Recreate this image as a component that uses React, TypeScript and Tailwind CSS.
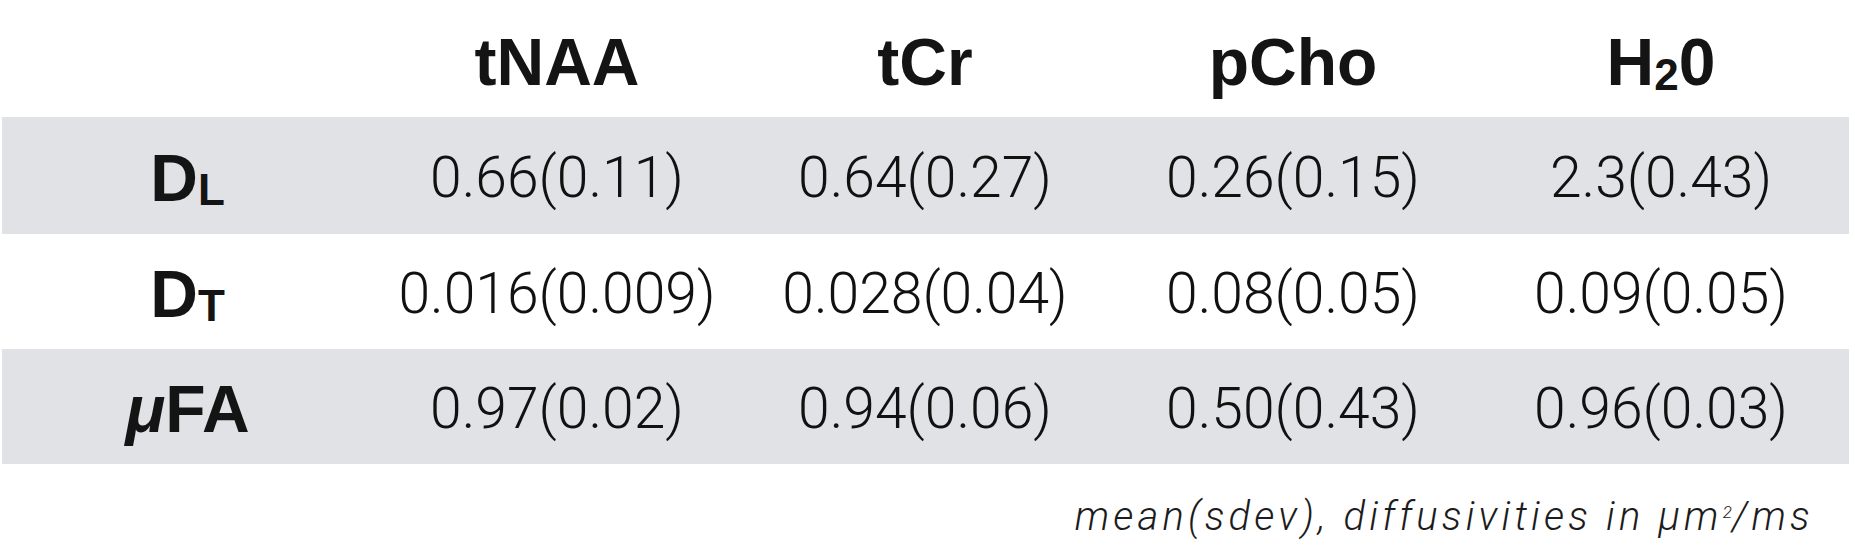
import React from "react"

const cols = ["tNAA", "tCr", "pCho"]

const rows: { label: React.ReactNode; values: string[]; shaded: boolean; height: string }[] = [
    {
        label: (
            <>
                D<span className="relative top-[4px] text-[44px]">L</span>
            </>
        ),
        values: ["0.66(0.11)", "0.64(0.27)", "0.26(0.15)", "2.3(0.43)"],
        shaded: true,
        height: "h-[117px]",
    },
    {
        label: (
            <>
                D<span className="relative top-[4px] text-[44px]">T</span>
            </>
        ),
        values: ["0.016(0.009)", "0.028(0.04)", "0.08(0.05)", "0.09(0.05)"],
        shaded: false,
        height: "h-[115px]",
    },
    {
        label: (
            <>
                <i>μ</i>FA
            </>
        ),
        values: ["0.97(0.02)", "0.94(0.06)", "0.50(0.43)", "0.96(0.03)"],
        shaded: true,
        height: "h-[115px]",
    },
]

const gridCols = "grid grid-cols-[371px_368px_368px_368px_368px]"

export default function App() {
    return (
        <div className="h-[552px] w-[1855px] bg-white font-['Liberation_Sans',Arial,sans-serif] text-[#141414]">
            <div className="ml-[2px] w-[1847px]">
                <div className={`${gridCols} h-[117px] items-center pt-[6px] text-[66px] font-bold leading-none`}>
                    <div />
                    {cols.map((c) => (
                        <div key={c} className="text-center">
                            {c}
                        </div>
                    ))}
                    <div className="text-center">
                        H<span className="relative top-[5px] text-[44px]">2</span>0
                    </div>
                </div>
                {rows.map((row, i) => (
                    <div
                        key={i}
                        className={`${gridCols} ${row.height} items-center pt-[4px] leading-none ${row.shaded ? "bg-[#e1e2e6]" : "bg-white"}`}
                    >
                        <div className="text-center text-[66px] font-bold">{row.label}</div>
                        {row.values.map((v, j) => (
                            <div key={j} className="text-center font-['Roboto',sans-serif] text-[57px] font-light text-[#111]">
                                {v}
                            </div>
                        ))}
                    </div>
                ))}
                <p className="pr-[35px] pt-[33px] text-right font-['Roboto',sans-serif] text-[40px] font-light italic leading-none tracking-[4.2px] text-[#1c1c1c]">
                    mean(sdev), diffusivities in μm
                    <span className="relative top-[-12px] text-[17px] tracking-normal">2</span>/ms
                </p>
            </div>
        </div>
    )
}
